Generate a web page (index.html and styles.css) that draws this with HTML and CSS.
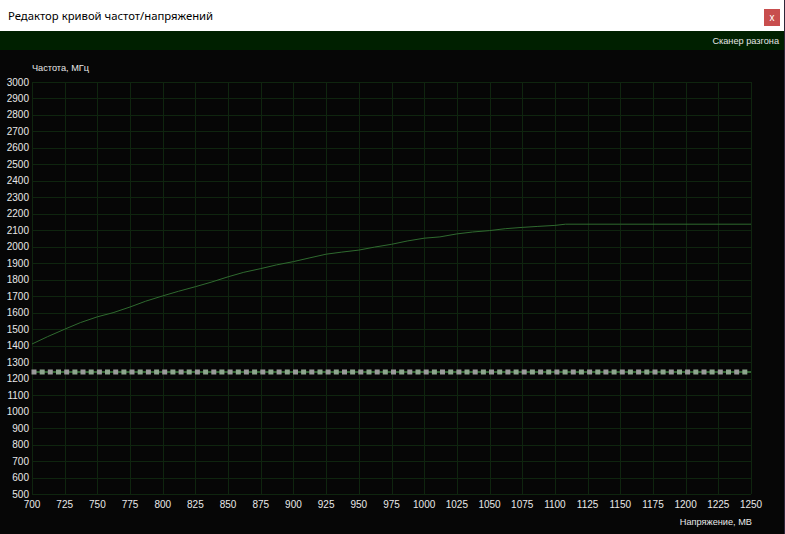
FILE: index.html
```html
<!DOCTYPE html>
<html lang="ru">
<head>
<meta charset="utf-8">
<title>Редактор кривой частот/напряжений</title>
<link rel="stylesheet" href="styles.css">
</head>
<body>
<div class="window">
  <header class="titlebar">
    <span class="title">Редактор кривой частот/напряжений</span>
    <button class="close">x</button>
  </header>
  <div class="toolbar"><span class="scanner">Сканер разгона</span></div>
  <svg class="chart" id="chart" width="785" height="484" viewBox="0 50 785 484" xmlns="http://www.w3.org/2000/svg">
    <g id="grid"></g>
    <g id="labels"></g>
    <text class="axis-title" x="32" y="71">Частота, МГц</text>
    <text class="axis-title end" x="752" y="524.5">Напряжение, МВ</text>
    <polyline id="curve" class="curve" points=""></polyline>
    <line class="flat" x1="32" y1="372" x2="751" y2="372"></line>
    <g id="dots"></g>
  </svg>
</div>
<script src="app.js"></script>
</body>
</html>
```

FILE: app.js
```js
(function () {
  var NS = "http://www.w3.org/2000/svg";
  var L = 32, R = 751, T = 82, B = 494;
  var dx = (R - L) / 22, dy = (B - T) / 25;
  var grid = document.getElementById("grid");
  var labels = document.getElementById("labels");
  function el(tag, attrs, parent, text) {
    var e = document.createElementNS(NS, tag);
    for (var k in attrs) e.setAttribute(k, attrs[k]);
    if (text !== undefined) e.textContent = text;
    parent.appendChild(e);
    return e;
  }
  for (var i = 0; i <= 22; i++) {
    var x = Math.round(L + i * dx) + 0.5;
    el("line", { x1: x, y1: T, x2: x, y2: B, "class": "gl" }, grid);
    el("text", { x: L + i * dx, y: 507.5, "class": "xl" }, labels, String(700 + i * 25));
  }
  for (var j = 0; j <= 25; j++) {
    var y = Math.round(T + j * dy) + 0.5;
    el("line", { x1: L, y1: y, x2: R, y2: y, "class": "gl" }, grid);
    el("text", { x: 29, y: T + j * dy + 3.5, "class": "yl" }, labels, String(3000 - j * 100));
  }
  var pts = [
    [700, 1410], [712, 1455], [725, 1500], [737, 1540], [750, 1575], [762, 1600],
    [775, 1635], [787, 1670], [800, 1702], [812, 1730], [825, 1758], [837, 1785],
    [850, 1818], [862, 1845], [875, 1868], [887, 1890], [900, 1910], [912, 1932],
    [925, 1955], [937, 1968], [950, 1980], [962, 1998], [975, 2015], [987, 2035],
    [1000, 2052], [1012, 2060], [1025, 2078], [1037, 2090], [1050, 2098], [1062, 2110],
    [1075, 2118], [1087, 2124], [1100, 2130], [1108, 2137], [1150, 2137], [1250, 2137]
  ];
  var s = pts.map(function (p) {
    var px = L + (p[0] - 700) / 25 * dx;
    var py = T + (3000 - p[1]) / 100 * dy;
    return px.toFixed(1) + "," + py.toFixed(1);
  }).join(" ");
  document.getElementById("curve").setAttribute("points", s);
  var dots = document.getElementById("dots");
  var step = dx / 4;
  for (var n = 0; n < 88; n++) {
    var cx = L + n * step;
    el("rect", { x: (cx - 0.5).toFixed(1), y: 369.5, width: 5, height: 5, "class": n % 2 ? "dot alt" : "dot" }, dots);
  }
})();
```

FILE: styles.css
```css
html, body {
  margin: 0;
  padding: 0;
  background: #060606;
}
.window {
  width: 785px;
  height: 534px;
  display: flex;
  flex-direction: column;
  background: #060606;
  overflow: hidden;
  box-sizing: border-box;
  border-right: 1px solid #2e2639;
}
.titlebar {
  height: 31px;
  flex: none;
  background: #ffffff;
  display: flex;
  align-items: center;
  justify-content: space-between;
  padding: 0 4px 0 8px;
  box-sizing: border-box;
}
.title {
  font-family: "Noto Sans", "DejaVu Sans", sans-serif;
  font-size: 11.3px;
  color: #000;
}
.close {
  width: 16px;
  height: 17px;
  border: none;
  padding: 0;
  margin-top: 4px;
  background: #c84e4e;
  color: #fff;
  font-family: "Liberation Sans", Arial, sans-serif;
  font-size: 10px;
  font-weight: normal;
  line-height: 15px;
}
.toolbar {
  height: 19px;
  flex: none;
  background: #002000;
  display: flex;
  align-items: center;
  justify-content: flex-end;
  padding-right: 5px;
}
.scanner {
  font-family: "Liberation Sans", Arial, sans-serif;
  font-size: 9.2px;
  color: #e6e6e6;
}
.chart {
  display: block;
  flex: none;
}
.gl {
  stroke: #0f250f;
  stroke-width: 1;
}
.xl, .yl, .axis-title {
  font-family: "Liberation Sans", Arial, sans-serif;
  font-size: 10px;
  fill: #e8e8e8;
}
.axis-title {
  font-size: 9.2px;
}
.xl {
  text-anchor: middle;
}
.yl {
  text-anchor: end;
}
.end {
  text-anchor: end;
}
.curve {
  fill: none;
  stroke: #2f6a2f;
  stroke-width: 1;
}
.flat {
  stroke: #5bbf5b;
  stroke-width: 1;
}
.dot {
  fill: #9a9a9a;
}
.dot.alt {
  fill: #8ea58e;
}
```
